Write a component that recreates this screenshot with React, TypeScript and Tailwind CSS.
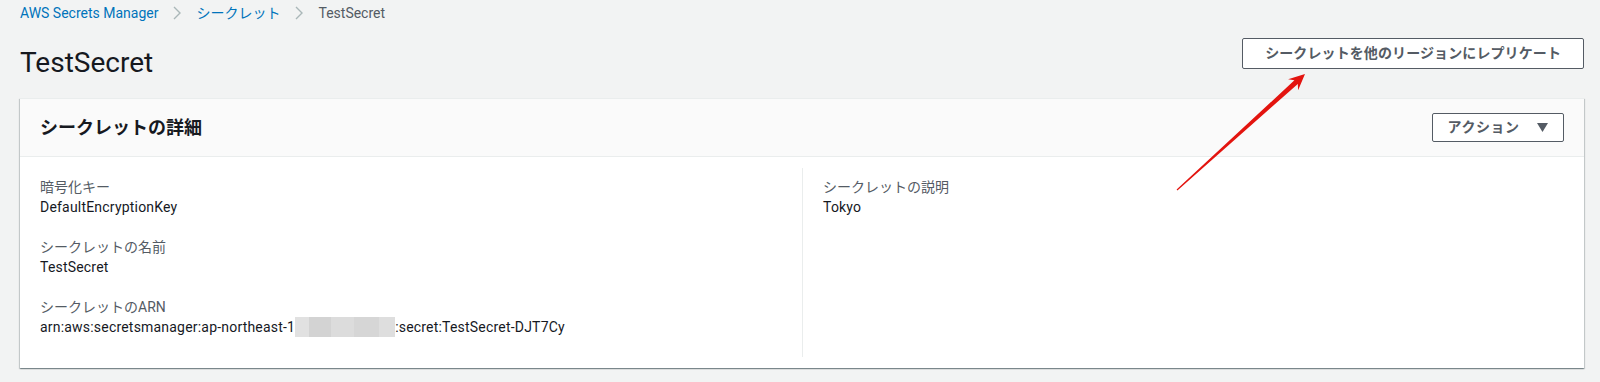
import React from 'react';

const font = 'font-[Roboto,"Noto_Sans_CJK_JP",sans-serif]';

function Chevron() {
  return (
    <svg width="8" height="14" viewBox="0 0 8 14" className="shrink-0">
      <polyline points="1,1 7,7 1,13" fill="none" stroke="#aab7b8" strokeWidth="1.4" />
    </svg>
  );
}

function Field({ label, children }: { label: string; children: React.ReactNode }) {
  return (
    <div className="mb-5">
      <div className="text-[14px] leading-[20px] text-[#545b64]">{label}</div>
      <div className="text-[14px] leading-[20px] tracking-[0.2px] text-[#16191f]">{children}</div>
    </div>
  );
}

export default function App() {
  return (
    <div className={`relative w-[1600px] h-[382px] bg-[#f2f3f3] pl-5 pr-4 ${font}`}>
      {/* breadcrumb */}
      <nav className="flex items-center gap-[15px] h-[26px] text-[14px]">
        <span className="text-[#0073bb]">AWS Secrets Manager</span>
        <Chevron />
        <span className="text-[#0073bb]">シークレット</span>
        <Chevron />
        <span className="text-[#545b64]">TestSecret</span>
      </nav>

      {/* page header */}
      <div className="flex justify-between items-start h-[72px]">
        <h1 className="mt-[19px] text-[28px] leading-[36px] text-[#16191f]">TestSecret</h1>
        <button className="mt-3 h-[31px] px-[22px] border border-[#545b64] rounded-[2px] bg-white text-[14px] font-bold tracking-[0.1px] text-[#545b64]">
          シークレットを他のリージョンにレプリケート
        </button>
      </div>

      {/* details card */}
      <section className="bg-white border-t border-[#eaeded] shadow-[0_1px_1px_0_rgba(0,28,36,0.3),1px_1px_1px_0_rgba(0,28,36,0.15),-1px_1px_1px_0_rgba(0,28,36,0.15)]">
        <div className="flex items-center justify-between h-[58px] px-5 bg-[#fafafa] border-b border-[#eaeded]">
          <h2 className="text-[18px] font-bold text-[#16191f]">シークレットの詳細</h2>
          <button className="flex items-center gap-[18px] h-[29px] w-[132px] justify-center border border-[#545b64] rounded-[2px] bg-white text-[14px] font-bold tracking-[0.5px] text-[#545b64]">
            アクション
            <svg width="11" height="9" viewBox="0 0 11 9">
              <polygon points="0,0 11,0 5.5,9" fill="#545b64" />
            </svg>
          </button>
        </div>

        <div className="grid grid-cols-2 py-[11px]">
          <div className="px-5 pt-[9px]">
            <Field label="暗号化キー">DefaultEncryptionKey</Field>
            <Field label="シークレットの名前">TestSecret</Field>
            <Field label="シークレットのARN">
              <span className="flex items-center">
                arn:aws:secretsmanager:ap-northeast-1
                <span className="flex h-[20px]">
                  <span className="w-[14px] bg-[#e1e1e1]" />
                  <span className="w-[22px] bg-[#d3d3d3]" />
                  <span className="w-[23px] bg-[#dcdcdc]" />
                  <span className="w-[25px] bg-[#d6d6d6]" />
                  <span className="w-[16px] bg-[#dedede]" />
                </span>
                :secret:TestSecret-DJT7Cy
              </span>
            </Field>
          </div>
          <div className="border-l border-[#eaeded] px-5 pt-[9px]">
            <Field label="シークレットの説明">Tokyo</Field>
          </div>
        </div>
      </section>

      {/* annotation arrow */}
      <svg className="absolute left-0 top-0 pointer-events-none" width="1600" height="382" viewBox="0 0 1600 382">
        <polygon
          points="1177.4,190.4 1297.8,84.0 1298.1,90.3 1305,74 1288.1,79.2 1294.4,80.3 1176.6,189.6"
          fill="#e3140f"
        />
      </svg>
    </div>
  );
}
